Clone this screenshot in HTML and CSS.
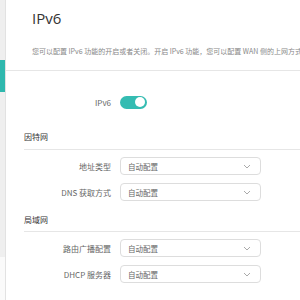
FILE: index.html
```html
<!DOCTYPE html>
<html>

<head>
    <title>IPv6</title>
    <link rel="stylesheet" href="styles.css">
</head>

<body>
    <div class="sidebar">
        <div class="nav-list">
            <div class="nav-active"></div>
        </div>
    </div>

    <div class="main">
        <div class="header">
            <h1>IPv6</h1>
            <p class="desc">您可以配置 IPv6 功能的开启或者关闭。开启 IPv6 功能，您可以配置 WAN 侧的上网方式和 LAN 侧的地址分配方式。</p>
        </div>

        <div class="content">
            <div class="row switch-row">
                <span class="label">IPv6</span>
                <span class="toggle on"><span class="knob"></span></span>
            </div>

            <div class="section-title">因特网</div>
            <div class="row">
                <span class="label">地址类型</span>
                <div class="select">自动配置<svg viewBox="0 0 8 5" width="8" height="5"><path d="M1 1l3 3 3-3" fill="none" stroke="#aaa" stroke-width="1"/></svg></div>
            </div>
            <div class="row">
                <span class="label">DNS 获取方式</span>
                <div class="select">自动配置<svg viewBox="0 0 8 5" width="8" height="5"><path d="M1 1l3 3 3-3" fill="none" stroke="#aaa" stroke-width="1"/></svg></div>
            </div>

            <div class="section-title lan">局域网</div>
            <div class="row">
                <span class="label">路由广播配置</span>
                <div class="select">自动配置<svg viewBox="0 0 8 5" width="8" height="5"><path d="M1 1l3 3 3-3" fill="none" stroke="#aaa" stroke-width="1"/></svg></div>
            </div>
            <div class="row">
                <span class="label">DHCP 服务器</span>
                <div class="select">自动配置<svg viewBox="0 0 8 5" width="8" height="5"><path d="M1 1l3 3 3-3" fill="none" stroke="#aaa" stroke-width="1"/></svg></div>
            </div>
        </div>
    </div>
</body>

</html>
```

FILE: styles.css
```css
body {
    margin: 0;
    display: flex;
    height: 300px;
    overflow: hidden;
    font-family: "Noto Sans CJK SC", "Noto Sans", sans-serif;
    background-color: #fff;
}

.sidebar {
    width: 5px;
    flex-shrink: 0;
    background-color: #fafafa;
    border-right: 1px solid #e2e2e2;
}

.nav-list {
    height: 257px;
    padding-top: 60px;
    box-sizing: border-box;
    background-color: #efefef;
}

.nav-active {
    height: 32px;
    background-color: #2fb8ae;
}

.main {
    flex: 1;
    min-width: 0;
    overflow: hidden;
}

.header {
    padding: 8px 0 0 26px;
    height: 62px;
    border-bottom: 1px solid #e6e6e6;
}

h1 {
    margin: 0;
    font-family: "Open Sans", "Noto Sans", sans-serif;
    font-size: 15px;
    line-height: 20px;
    font-weight: 400;
    color: #333;
}

.desc {
    margin: 18px 0 0 0;
    font-size: 7px;
    line-height: 10px;
    color: #888;
    white-space: nowrap;
}

.content {
    padding: 24px 0 0 18px;
}

.row {
    display: flex;
    align-items: center;
    height: 18px;
    margin-top: 8px;
}

.switch-row {
    height: 14px;
    margin-top: 0;
}

.label {
    width: 87px;
    text-align: right;
    margin-right: 9px;
    font-size: 8px;
    color: #666;
    white-space: nowrap;
}

.toggle {
    width: 27px;
    height: 13px;
    border-radius: 7px;
    background-color: #ccc;
    position: relative;
}

.toggle.on {
    background-color: #35bcb2;
}

.knob {
    position: absolute;
    top: 1.5px;
    right: 2px;
    width: 10px;
    height: 10px;
    border-radius: 50%;
    background-color: #fff;
}

.section-title {
    margin-top: 22px;
    padding-bottom: 6px;
    font-size: 8px;
    line-height: 12px;
    color: #333;
    border-bottom: 1px solid #e6e6e6;
}

.section-title + .row {
    margin-top: 7px;
}

.section-title.lan {
    margin-top: 13px;
    padding-bottom: 5px;
}

.select {
    width: 141px;
    height: 18px;
    box-sizing: border-box;
    border: 1px solid #ddd;
    border-radius: 4px;
    display: flex;
    align-items: center;
    justify-content: space-between;
    padding: 0 9px 0 7px;
    font-size: 7.5px;
    color: #666;
}
```
